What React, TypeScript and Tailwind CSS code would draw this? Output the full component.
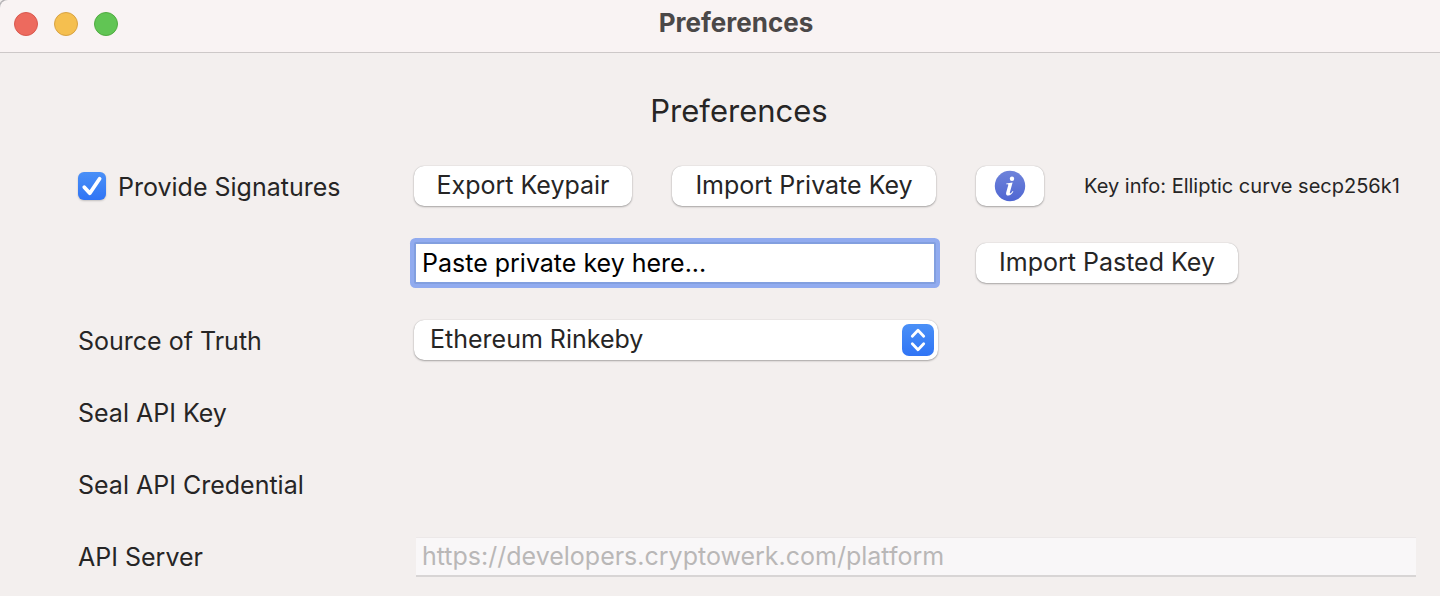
import { useState } from 'react';
import type { ReactNode } from 'react';

const buttonClass =
  'flex h-10 items-center justify-center rounded-[10px] bg-white whitespace-nowrap shadow-[0_0_1px_rgba(0,0,0,0.25),0_1px_2px_rgba(0,0,0,0.3)] active:bg-gray-100';

function Row({ label, children, className }: { label: ReactNode; children?: ReactNode; className: string }) {
  return (
    <div className={`flex items-center ${className}`}>
      <div className="flex w-[336px] shrink-0 items-center">{label}</div>
      {children}
    </div>
  );
}

function TitleBar() {
  return (
    <header className="flex h-[53px] items-center rounded-tl-lg border-b border-[#cdc8c8] bg-[#f9f3f3] px-3.5 pb-1 shadow-[-1px_-1px_0_#b5b2b5]">
      <div className="flex flex-1 gap-4">
        <button type="button" aria-label="Close" className="size-6 rounded-full border border-[#d9584e] bg-[#ed6a5e]" />
        <button type="button" aria-label="Minimize" className="size-6 rounded-full border border-[#d8a243] bg-[#f5bf4f]" />
        <button type="button" aria-label="Zoom" className="size-6 rounded-full border border-[#51ab41] bg-[#61c554]" />
      </div>
      <span className="pb-0.5 pl-8 text-[26px] leading-8 font-bold text-[#4b4848]">Preferences</span>
      <div className="flex-1" />
    </header>
  );
}

export default function App() {
  const [signed, setSigned] = useState(true);
  const [key, setKey] = useState('Paste private key here...');

  return (
    <div className="min-h-screen bg-[#f3efee] font-['Inter','Liberation_Sans',sans-serif] text-[25px] leading-8 text-[#262525]">
      <TitleBar />
      <main className="pt-[38px] pr-6 pb-5 pl-[78px]">
        <h1 className="mb-[35px] pr-4 text-center text-[31px] leading-10">Preferences</h1>

        <Row
          className="mb-[37px] h-10"
          label={
            <label className="flex items-center gap-3">
              <span className="relative flex size-7">
                <input
                  type="checkbox"
                  checked={signed}
                  onChange={(e) => setSigned(e.target.checked)}
                  className="peer size-7 appearance-none rounded-md bg-white shadow-[0_1px_2px_rgba(0,0,0,0.2)] checked:bg-linear-to-b checked:from-[#4a90f7] checked:to-[#3074f5]"
                />
                <svg viewBox="0 0 28 28" className="pointer-events-none absolute inset-0 hidden size-7 peer-checked:block" fill="none" stroke="white" strokeWidth="3.8" strokeLinecap="round" strokeLinejoin="round">
                  <path d="M6.3 15.2 11.8 21.2 21.6 6.8" />
                </svg>
              </span>
              <span className="pt-0.5">Provide Signatures</span>
            </label>
          }
        >
          <div className="flex w-[562px] shrink-0 gap-10">
            <button type="button" className={`${buttonClass} w-[218px] pb-0.5`}>Export Keypair</button>
            <button type="button" className={`${buttonClass} w-[264px] pb-0.5`}>Import Private Key</button>
          </div>
          <button type="button" aria-label="Key information" className={`${buttonClass} w-[68px] shrink-0`}>
            <svg viewBox="0 0 32 32" className="size-8">
              <defs>
                <linearGradient id="info" x1="0" y1="0" x2="0" y2="1">
                  <stop offset="0" stopColor="#6e83da" />
                  <stop offset="1" stopColor="#4f66d2" />
                </linearGradient>
              </defs>
              <circle cx="16" cy="16" r="15.2" fill="url(#info)" />
              <circle cx="18" cy="8.7" r="2.2" fill="white" />
              <path d="M12.3 13.4 18.6 12.5 15.9 22.3Q15.6 23.7 16.5 23.3 17.5 22.8 18.7 21.1L19.4 21.6C17.7 24.4 16.2 25.6 14.3 25.6 12.4 25.6 11.7 24.3 12.2 22.4L14.3 15Q14.5 14.2 13.6 14.2L12.1 14.2Z" fill="white" />
            </svg>
          </button>
          <span className="ml-10 text-xl whitespace-nowrap">Key info: Elliptic curve secp256k1</span>
        </Row>

        <Row className="mb-[37px] h-10" label={null}>
          <div className="flex w-[562px] shrink-0 pr-10">
            <input
              type="text"
              aria-label="Private key"
              value={key}
              onChange={(e) => setKey(e.target.value)}
              className="h-[42px] w-full border-2 border-[#829fdf] bg-white px-1.5 text-black shadow-[0_0_0_4px_#91abef] [border-radius:2px] outline-none"
            />
          </div>
          <button type="button" className={`${buttonClass} w-[262px] shrink-0 pb-0.5`}>Import Pasted Key</button>
        </Row>

        <Row className="mb-[37px] h-10" label={<label htmlFor="source" className="pt-0.5">Source of Truth</label>}>
          <div className="relative w-[524px]">
            <select
              id="source"
              className="h-10 w-full appearance-none rounded-[10px] bg-white pr-10 pb-0.5 pl-4 shadow-[0_0_1px_rgba(0,0,0,0.25),0_1px_2px_rgba(0,0,0,0.3)] outline-none"
            >
              <option>Ethereum Rinkeby</option>
            </select>
            <span className="pointer-events-none absolute top-1 right-1 size-8 rounded-[7px] bg-linear-to-b from-[#4a90f7] to-[#3074f5]">
              <svg viewBox="0 0 32 32" className="size-8" fill="none" stroke="white" strokeWidth="2.8" strokeLinecap="round" strokeLinejoin="round">
                <path d="M10.3 12.2 16 6.3 21.7 12.2M10.3 19.8 16 25.7 21.7 19.8" />
              </svg>
            </span>
          </div>
        </Row>

        <Row className="mb-10 h-8" label="Seal API Key" />
        <Row className="mb-10 h-8" label="Seal API Credential" />
        <Row className="h-8" label={<label htmlFor="server">API Server</label>}>
          <input
            id="server"
            type="text"
            disabled
            defaultValue="https://developers.cryptowerk.com/platform"
            className="ml-0.5 h-10 min-w-0 flex-1 border-t border-b-2 border-t-[#ece8e8] border-b-[#d8d5d5] bg-[#f9f7f8] px-1.5 pb-0.5 text-[#b9b7b7]"
          />
        </Row>
      </main>
    </div>
  );
}
